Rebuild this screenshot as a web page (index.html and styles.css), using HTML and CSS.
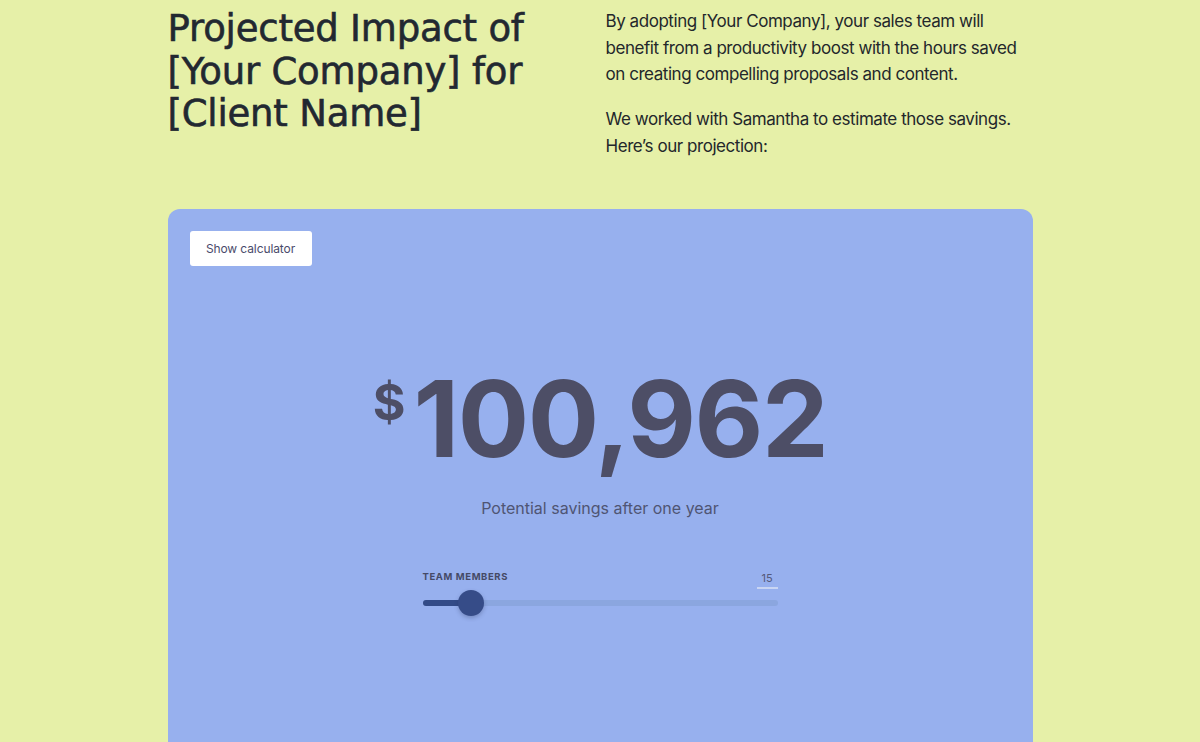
FILE: index.html
```html
<!DOCTYPE html>
<html lang="en">
<head>
<meta charset="utf-8">
<title>Projected Impact</title>
<link rel="stylesheet" href="styles.css">
</head>
<body>
<main class="page">
  <section class="intro">
    <h1 class="title">Projected Impact of [Your Company] for [Client Name]</h1>
    <div class="copy">
      <p>By adopting [Your Company], your sales team will benefit from a productivity boost with the hours saved on creating compelling proposals and content.</p>
      <p>We worked with Samantha to estimate those savings. Here’s our projection:</p>
    </div>
  </section>
  <section class="card">
    <button class="calc-btn" type="button">Show calculator</button>
    <div class="result">
      <div class="amount"><span class="currency">$</span><span class="value">100,962</span></div>
      <p class="caption">Potential savings after one year</p>
      <div class="slider">
        <div class="slider-head">
          <span class="slider-label">TEAM MEMBERS</span>
          <span class="slider-value">15</span>
        </div>
        <div class="track">
          <div class="fill"></div>
          <div class="thumb"></div>
        </div>
      </div>
    </div>
  </section>
</main>
</body>
</html>
```
FILE: styles.css
```css
* { box-sizing: border-box; }
html, body { margin: 0; padding: 0; }
body {
  background: #e6f0a8;
  font-family: Inter, "Liberation Sans", sans-serif;
  color: #23272b;
  overflow: hidden;
}
.page {
  width: 865px;
  margin: 0 auto;
}
.intro {
  display: flex;
  justify-content: space-between;
  padding-top: 8px;
  height: 209px;
}
.title {
  margin: 0;
  width: 410px;
  font-family: "DejaVu Sans", sans-serif;
  font-weight: 400;
  font-size: 37px;
  line-height: 42.5px;
  letter-spacing: -0.2px;
  -webkit-text-stroke: 0.6px #222831;
  color: #222831;
}
.copy {
  width: 427px;
  padding-top: 0;
}
.copy p {
  margin: 0 0 18.5px;
  font-size: 17px;
  line-height: 26.5px;
  letter-spacing: -0.45px;
  color: #23272b;
}
.card {
  background: #97b0ee;
  border-radius: 12px 12px 0 0;
  height: 560px;
  padding: 22px;
}
.calc-btn {
  display: block;
  background: #fff;
  border: none;
  border-radius: 3px;
  width: 122px;
  height: 35px;
  font-family: Inter, "Liberation Sans", sans-serif;
  font-size: 12px;
  letter-spacing: -0.1px;
  color: #4a4b6b;
  padding: 0;
}
.result {
  display: flex;
  flex-direction: column;
  align-items: center;
  margin-top: 99.5px;
}
.amount {
  display: flex;
  align-items: flex-start;
  color: #4d4e66;
  font-weight: 700;
}
.currency {
  font-size: 50px;
  line-height: 1;
  margin-top: 11px;
  margin-right: 8px;
}
.value {
  font-size: 106px;
  line-height: 1;
  letter-spacing: -1.5px;
}
.caption {
  margin: 24.5px 0 0;
  font-size: 16px;
  line-height: 24px;
  color: #4f5573;
}
.slider {
  width: 355px;
  margin-top: 51px;
}
.slider-head {
  display: flex;
  justify-content: space-between;
  align-items: flex-start;
  height: 18px;
}
.slider-label {
  font-size: 9.5px;
  line-height: 12px;
  font-weight: 700;
  letter-spacing: 0.6px;
  color: #454a66;
}
.slider-value {
  font-size: 11px;
  line-height: 14px;
  color: #54597a;
  width: 21px;
  text-align: center;
  padding-bottom: 2px;
  border-bottom: 2px solid #c9d5f3;
}
.track {
  position: relative;
  height: 6px;
  margin-top: 11px;
  border-radius: 3px;
  background: #8ba6df;
}
.fill {
  width: 48px;
  height: 100%;
  border-radius: 3px;
  background: #334b87;
}
.thumb {
  position: absolute;
  left: 35px;
  top: -10px;
  width: 26px;
  height: 26px;
  border-radius: 50%;
  background: #364c88;
  box-shadow: 0 2px 4px rgba(40, 50, 90, 0.3);
}
```
